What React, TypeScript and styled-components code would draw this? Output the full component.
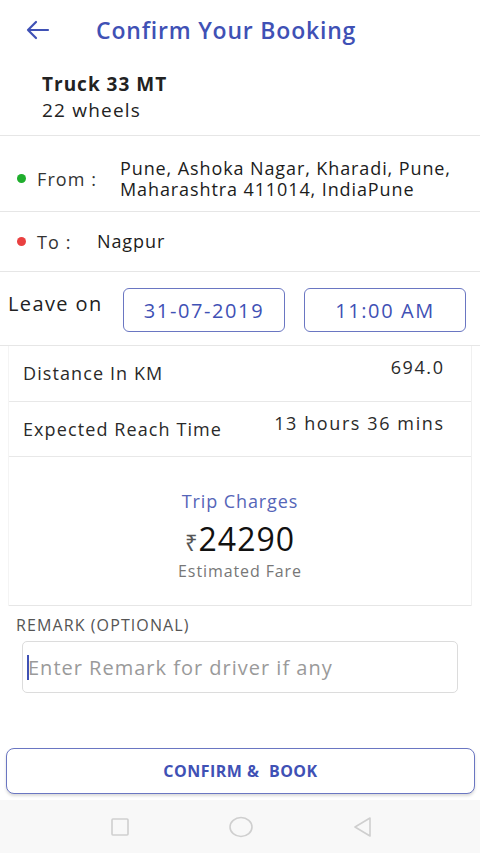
import React from 'react';
import styled, { createGlobalStyle } from 'styled-components';

const GlobalStyle = createGlobalStyle`
    html, body {
        margin: 0;
        padding: 0;
        background: #ffffff;
    }
    body {
        font-family: "Open Sans", "Noto Sans", "Liberation Sans", sans-serif;
        color: #222222;
    }
`;

const Screen = styled.div`
    width: 480px;
    height: 853px;
    display: flex;
    flex-direction: column;
    background: #ffffff;
    overflow: hidden;
`;

const Header = styled.div`
    height: 60px;
    display: flex;
    align-items: center;
    padding-left: 25px;
    gap: 46px;
`;

const BackIcon = styled.svg`
    width: 25px;
    height: 20px;
    flex-shrink: 0;
`;

const Title = styled.div`
    font-size: 23px;
    font-weight: 600;
    color: #3f51b5;
    letter-spacing: 0.8px;
`;

const TruckInfo = styled.div`
    padding: 11px 42px 12px;
    border-bottom: 1px solid #e6e6e6;
    line-height: 26px;
`;

const TruckName = styled.div`
    font-size: 19px;
    font-weight: 700;
    color: #222;
    letter-spacing: 1px;
`;

const TruckWheels = styled.div`
    font-size: 19px;
    color: #222;
    letter-spacing: 1.2px;
`;

const PlaceRow = styled.div<{ $height: number; $shift: number }>`
    height: ${p => p.$height}px;
    display: flex;
    align-items: center;
    padding-left: 17px;
    padding-top: ${p => p.$shift}px;
    box-sizing: border-box;
    border-bottom: 1px solid #e6e6e6;
`;

const Dot = styled.span<{ $color: string }>`
    width: 9px;
    height: 9px;
    border-radius: 50%;
    background: ${p => p.$color};
    margin-right: 11px;
    flex-shrink: 0;
`;

const PlaceLabel = styled.div<{ $width: number }>`
    width: ${p => p.$width}px;
    font-size: 18px;
    color: #333;
    letter-spacing: 1.1px;
    flex-shrink: 0;
`;

const PlaceValue = styled.div`
    font-size: 18px;
    line-height: 21px;
    color: #1c1c1c;
    letter-spacing: 0.9px;
    white-space: nowrap;
`;

const LeaveRow = styled.div`
    height: 74px;
    display: flex;
    align-items: flex-start;
    padding: 16px 14px 0 8px;
    border-bottom: 1px solid #e6e6e6;
    box-sizing: border-box;
`;

const LeaveLabel = styled.div`
    font-size: 20px;
    color: #222;
    width: 115px;
    padding-top: 2px;
    letter-spacing: 1.4px;
`;

const PickerBox = styled.div`
    width: 162px;
    height: 44px;
    box-sizing: border-box;
    border: 1.5px solid #6a76c2;
    border-radius: 6px;
    display: flex;
    align-items: center;
    justify-content: center;
    font-size: 20px;
    color: #3f51b5;
    letter-spacing: 1.6px;
    & + & {
        margin-left: 19px;
    }
`;

const InfoCard = styled.div`
    margin: 0 8px;
    border-left: 1px solid #f4f4f4;
    border-right: 1px solid #f0f0f0;
`;

const InfoRow = styled.div<{ $height: number }>`
    height: ${p => p.$height}px;
    display: flex;
    justify-content: space-between;
    padding: 0 28px 0 14px;
    border-bottom: 1px solid #e8e8e8;
    box-sizing: border-box;
`;

const InfoLabel = styled.div`
    font-size: 18px;
    color: #2a2a2a;
    padding-top: 15px;
    letter-spacing: 1.1px;
`;

const InfoValue = styled.div`
    font-size: 18px;
    color: #2a2a2a;
    padding-top: 9px;
    letter-spacing: 1.6px;
    margin-right: -1.6px;
`;

const Charges = styled.div`
    height: 149px;
    display: flex;
    flex-direction: column;
    align-items: center;
    padding-top: 32px;
    box-sizing: border-box;
    border-bottom: 1px solid #e6e6e6;
`;

const ChargesTitle = styled.div`
    font-size: 18px;
    color: #5565b8;
    letter-spacing: 0.9px;
`;

const Amount = styled.div`
    display: flex;
    align-items: baseline;
    margin-top: 4px;
    color: #111;
`;

const Rupee = styled.span`
    font-size: 22px;
    color: #555;
    margin-right: 1px;
`;

const AmountValue = styled.span`
    font-size: 32px;
    letter-spacing: 1px;
`;

const ChargesNote = styled.div`
    font-size: 16px;
    color: #777;
    margin-top: 0;
    letter-spacing: 0.9px;
`;

const RemarkSection = styled.div`
    padding: 8px 22px 0 16px;
`;

const RemarkLabel = styled.div`
    font-size: 16px;
    color: #555;
    letter-spacing: 1.1px;
`;

const RemarkInput = styled.div`
    margin: 5px 0 0 6px;
    height: 52px;
    box-sizing: border-box;
    border: 1px solid #dcdcdc;
    border-radius: 5px;
    display: flex;
    align-items: center;
    padding-left: 4px;
`;

const Caret = styled.span`
    width: 2px;
    height: 25px;
    background: #3f51b5;
    margin-right: -1px;
`;

const Placeholder = styled.span`
    font-size: 20px;
    color: #9a9a9a;
    letter-spacing: 1px;
`;

const Footer = styled.div`
    margin-top: auto;
    padding: 0 5px 6px 6px;
`;

const ConfirmButton = styled.button`
    width: 100%;
    height: 46px;
    background: #ffffff;
    border: 1.5px solid #6a76c2;
    border-radius: 8px;
    box-shadow: 0 2px 3px rgba(0, 0, 0, 0.15);
    font-family: "Open Sans", "Noto Sans", "Liberation Sans", sans-serif;
    font-size: 16px;
    font-weight: 700;
    color: #3f51b5;
    letter-spacing: 0.5px;
    white-space: pre;
`;

const NavBar = styled.div`
    height: 53px;
    background: #f8f8f8;
    display: flex;
    align-items: center;
    justify-content: space-between;
    padding: 0 106px 0 108px;
`;

const NavIcon = styled.svg`
    width: 24px;
    height: 24px;
`;

export default function App() {
    return (
        <>
            <GlobalStyle />
            <Screen>
                <Header>
                    <BackIcon viewBox="0 0 25 20">
                        <path d="M23 10H3M11 2L3 10l8 8" fill="none" stroke="#3f51b5" strokeWidth="2.2" strokeLinecap="round" strokeLinejoin="round" />
                    </BackIcon>
                    <Title>Confirm Your Booking</Title>
                </Header>

                <TruckInfo>
                    <TruckName>Truck 33 MT</TruckName>
                    <TruckWheels>22 wheels</TruckWheels>
                </TruckInfo>

                <PlaceRow $height={76} $shift={10}>
                    <Dot $color="#1fae2d" />
                    <PlaceLabel $width={83}>From :</PlaceLabel>
                    <PlaceValue>Pune, Ashoka Nagar, Kharadi, Pune,<br />Maharashtra 411014, IndiaPune</PlaceValue>
                </PlaceRow>

                <PlaceRow $height={60} $shift={0}>
                    <Dot $color="#e94040" />
                    <PlaceLabel $width={60}>To :</PlaceLabel>
                    <PlaceValue>Nagpur</PlaceValue>
                </PlaceRow>

                <LeaveRow>
                    <LeaveLabel>Leave on</LeaveLabel>
                    <PickerBox>31-07-2019</PickerBox>
                    <PickerBox>11:00 AM</PickerBox>
                </LeaveRow>

                <InfoCard>
                    <InfoRow $height={56}>
                        <InfoLabel>Distance In KM</InfoLabel>
                        <InfoValue>694.0</InfoValue>
                    </InfoRow>
                    <InfoRow $height={55}>
                        <InfoLabel>Expected Reach Time</InfoLabel>
                        <InfoValue>13 hours 36 mins</InfoValue>
                    </InfoRow>
                    <Charges>
                        <ChargesTitle>Trip Charges</ChargesTitle>
                        <Amount>
                            <Rupee>₹</Rupee>
                            <AmountValue>24290</AmountValue>
                        </Amount>
                        <ChargesNote>Estimated Fare</ChargesNote>
                    </Charges>
                </InfoCard>

                <RemarkSection>
                    <RemarkLabel>REMARK (OPTIONAL)</RemarkLabel>
                    <RemarkInput>
                        <Caret />
                        <Placeholder>Enter Remark for driver if any</Placeholder>
                    </RemarkInput>
                </RemarkSection>

                <Footer>
                    <ConfirmButton>CONFIRM &  BOOK</ConfirmButton>
                </Footer>

                <NavBar>
                    <NavIcon viewBox="0 0 24 24">
                        <rect x="4" y="4" width="16" height="16" rx="1" fill="none" stroke="#cfcfcf" strokeWidth="1.6" />
                    </NavIcon>
                    <NavIcon viewBox="0 0 24 24">
                        <ellipse cx="12" cy="12" rx="11" ry="9.5" fill="none" stroke="#cfcfcf" strokeWidth="1.6" />
                    </NavIcon>
                    <NavIcon viewBox="0 0 24 24">
                        <path d="M20 3L5 12l15 9z" fill="none" stroke="#cfcfcf" strokeWidth="1.6" strokeLinejoin="round" />
                    </NavIcon>
                </NavBar>
            </Screen>
        </>
    );
}
